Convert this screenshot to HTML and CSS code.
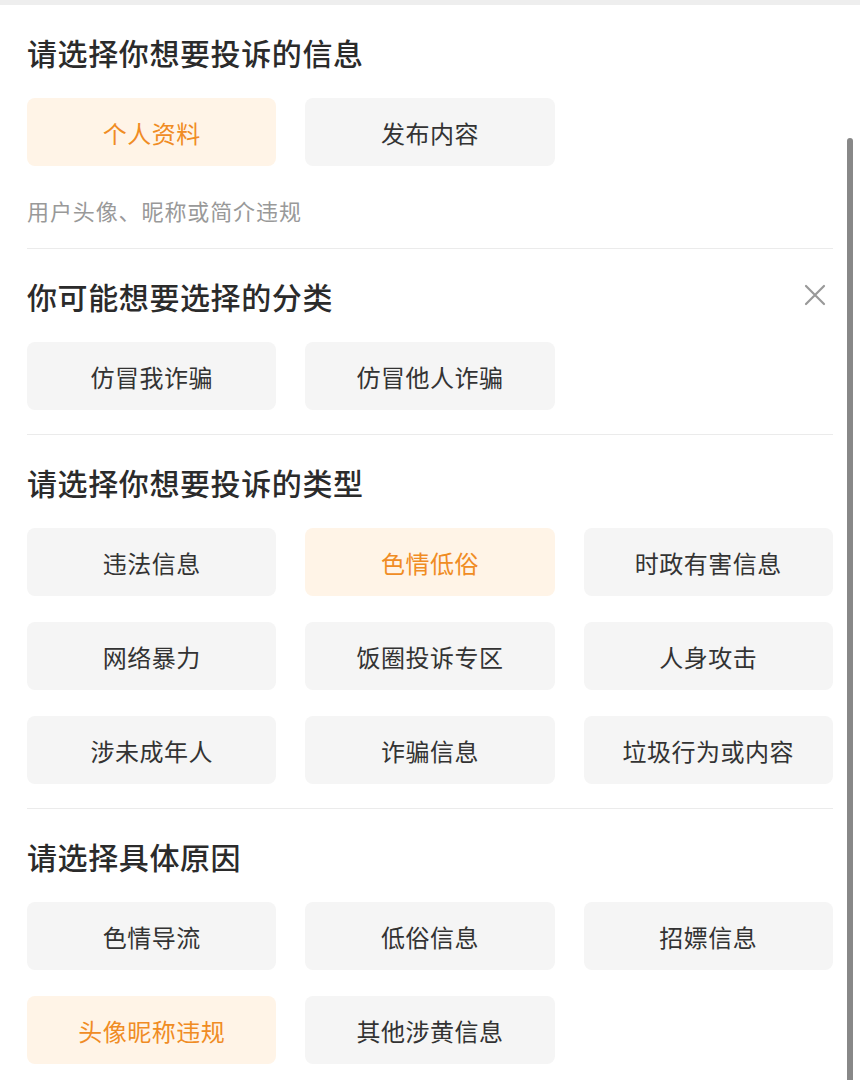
FILE: index.html
```html
<!DOCTYPE html>
<html lang="zh-CN">
<head>
  <meta charset="UTF-8" />
  <meta name="viewport" content="width=device-width, initial-scale=1.0"/>
  <title>投诉</title>
  <link rel="stylesheet" href="styles.css">
</head>
<body>

  <div class="top-bar"></div>

  <div class="sheet">
    <div class="section">
      <div class="title">请选择你想要投诉的信息</div>
      <div class="options">
        <div class="option active">个人资料</div>
        <div class="option">发布内容</div>
      </div>
      <div class="hint">用户头像、昵称或简介违规</div>
    </div>

    <div class="section">
      <div class="title-row">
        <div class="title">你可能想要选择的分类</div>
        <svg class="close" width="22" height="22" viewBox="0 0 22 22">
          <path d="M2 2 L20 20 M20 2 L2 20" stroke="#999" stroke-width="2.2" stroke-linecap="round" fill="none"/>
        </svg>
      </div>
      <div class="options">
        <div class="option">仿冒我诈骗</div>
        <div class="option">仿冒他人诈骗</div>
      </div>
    </div>

    <div class="section">
      <div class="title">请选择你想要投诉的类型</div>
      <div class="options">
        <div class="option">违法信息</div>
        <div class="option active">色情低俗</div>
        <div class="option">时政有害信息</div>
        <div class="option">网络暴力</div>
        <div class="option">饭圈投诉专区</div>
        <div class="option">人身攻击</div>
        <div class="option">涉未成年人</div>
        <div class="option">诈骗信息</div>
        <div class="option">垃圾行为或内容</div>
      </div>
    </div>

    <div class="section last">
      <div class="title">请选择具体原因</div>
      <div class="options">
        <div class="option">色情导流</div>
        <div class="option">低俗信息</div>
        <div class="option">招嫖信息</div>
        <div class="option active">头像昵称违规</div>
        <div class="option">其他涉黄信息</div>
      </div>
    </div>
  </div>

  <div class="scrollbar"></div>

</body>
</html>
```

FILE: styles.css
```css
body {
  margin: 0;
  font-family: "Noto Sans CJK SC", "Noto Sans", sans-serif;
  background: #fff;
  color: #333;
  height: 1080px;
  overflow: hidden;
  position: relative;
}

.top-bar {
  height: 5px;
  background: #eeeeee;
}

.sheet {
  padding: 0 27px;
}

.section {
  padding: 27px 0 24px;
  border-bottom: 1px solid #ebebeb;
}

.section.last {
  border-bottom: none;
}

.title {
  font-size: 30px;
  font-weight: 500;
  line-height: 40px;
  color: #2b2b2b;
  letter-spacing: 0.6px;
}

.title-row {
  display: flex;
  justify-content: space-between;
  align-items: center;
}

.close {
  margin-right: 7px;
  margin-top: -3px;
}

.options {
  display: grid;
  grid-template-columns: repeat(3, 1fr);
  column-gap: 29px;
  row-gap: 26px;
  margin-top: 26px;
}

.option {
  height: 68px;
  border-radius: 8px;
  background: #f5f5f5;
  display: flex;
  align-items: center;
  justify-content: center;
  font-size: 24px;
  color: #333;
  letter-spacing: 0.5px;
}

.option.active {
  background: #fff4e7;
  color: #f08c24;
}

.hint {
  margin-top: 28px;
  font-size: 22px;
  line-height: 32px;
  color: #999;
  letter-spacing: 0.9px;
  margin-bottom: -2px;
}

.scrollbar {
  position: absolute;
  left: 847px;
  top: 138px;
  width: 6px;
  height: 960px;
  background: #888;
  border-radius: 3px;
}
```
